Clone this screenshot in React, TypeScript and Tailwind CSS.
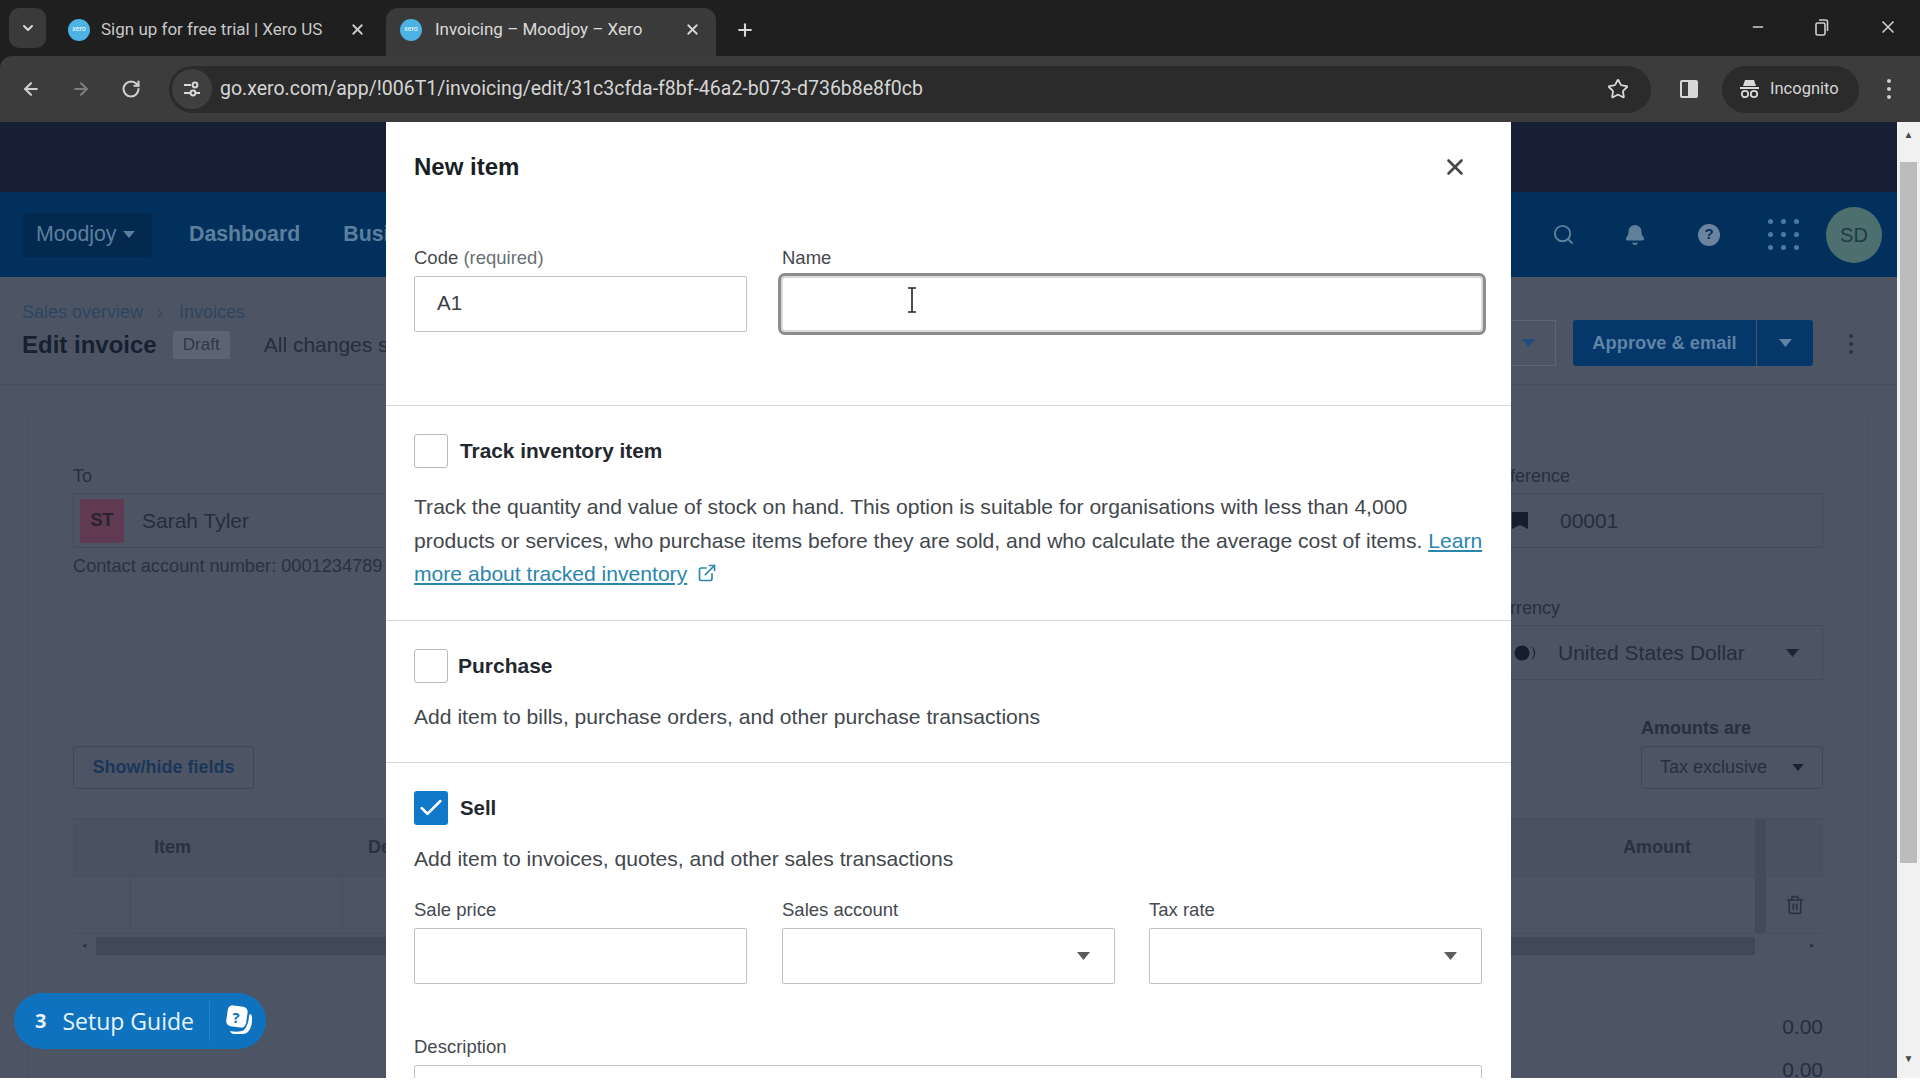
import React from "react";
import { ArrowLeft, ArrowRight, RotateCw, Star, X, Plus, ChevronDown, Minus, Search, Bell, Trash2, Check, ExternalLink } from "lucide-react";

const Caret = ({ c = "#5c5c5c", w = 13 }: { c?: string; w?: number }) => (
  <svg width={w} height={Math.round(w * 0.62)} viewBox="0 0 10 6"><path d="M0 0h10L5 6z" fill={c} /></svg>
);

const Favicon = () => (
  <div className="w-[22px] h-[22px] rounded-full bg-[#4db2e4] flex items-center justify-center shrink-0">
    <span className="text-[7px] text-white leading-none">xero</span>
  </div>
);

function Tabs() {
  return (
    <div className="h-[56px] bg-[#1f1f1f] flex items-end pl-[9px] shrink-0">
      <div className="w-[37px] h-[40px] mb-[8px] rounded-[10px] bg-[#3a3a3a] flex items-center justify-center">
        <ChevronDown size={16} strokeWidth={3} color="#d8d8d8" />
      </div>
      <div className="w-[340px] h-[48px] pl-[22px] pb-[5px] flex items-center text-[#c8c8c8] text-[17px]">
        <Favicon />
        <span className="ml-[11px] w-[248px] whitespace-nowrap">Sign up for free trial | Xero US</span>
        <X size={17} strokeWidth={2.5} color="#cfcfcf" />
      </div>
      <div className="w-[330px] h-[48px] pl-[14px] pb-[5px] bg-[#3a3a3a] rounded-t-[12px] flex items-center text-[#dadada] text-[17px]">
        <Favicon />
        <span className="ml-[13px] w-[249px] whitespace-nowrap">Invoicing – Moodjoy – Xero</span>
        <X size={17} strokeWidth={2.5} color="#d8d8d8" />
      </div>
      <div className="h-[48px] ml-[19px] pb-[5px] flex items-center"><Plus size={20} strokeWidth={2.5} color="#d8d8d8" /></div>
      <div className="flex-1" />
      <div className="h-[56px] flex items-center pr-[22px] gap-[48px] pb-[2px]">
        <Minus size={16} strokeWidth={2} color="#cfcfcf" />
        <svg width="16" height="18" viewBox="0 0 16 18" fill="none" stroke="#cfcfcf" strokeWidth="1.6"><rect x="2" y="5" width="9" height="12" rx="1.5" /><path d="M5 2h6.5a2 2 0 0 1 2 2v9" /></svg>
        <X size={20} strokeWidth={2} color="#cfcfcf" />
      </div>
    </div>
  );
}

function Toolbar() {
  return (
    <div className="h-[66px] bg-[#3c3c3c] rounded-tl-[12px] flex items-center pl-[21px] shrink-0">
      <ArrowLeft size={20} strokeWidth={2.5} color="#d0d0d0" />
      <ArrowRight size={20} strokeWidth={2.5} color="#7d7d7d" className="ml-[30px]" />
      <RotateCw size={20} strokeWidth={2.5} color="#d0d0d0" className="ml-[30px]" />
      <div className="ml-[28px] w-[1482px] h-[47px] bg-[#2b2b2b] rounded-full flex items-center pl-[3px]">
        <div className="w-[40px] h-[40px] rounded-full bg-[#3f3f3f] flex items-center justify-center">
          <svg width="18" height="18" viewBox="0 0 18 18" fill="none" stroke="#d8d8d8" strokeWidth="2"><path d="M1 5h7M13 13h4M1 13h6" /><circle cx="12" cy="5" r="2.4" /><circle cx="10" cy="13" r="2.4" /></svg>
        </div>
        <span className="ml-[8px] text-[19.5px] text-[#d6d6d6] whitespace-nowrap">go.xero.com/app/!006T1/invoicing/edit/31c3cfda-f8bf-46a2-b073-d736b8e8f0cb</span>
        <div className="flex-1" />
        <Star size={22} strokeWidth={2} color="#d8d8d8" className="mr-[22px]" />
      </div>
      <div className="ml-[29px] w-[18px] h-[18px] border-2 border-[#d8d8d8] flex justify-end rounded-[2px]"><div className="w-[8px] bg-[#d8d8d8]" /></div>
      <div className="ml-[24px] w-[137px] h-[47px] rounded-full bg-[#2b2b2b] flex items-center pl-[17px] gap-[10px]">
        <svg width="21" height="20" viewBox="0 0 21 20" fill="#dadada"><path d="M6 1h9l2 6H4z" /><rect x="1" y="8" width="19" height="2" /><circle cx="6" cy="15" r="3.2" fill="none" stroke="#dadada" strokeWidth="1.8" /><circle cx="15" cy="15" r="3.2" fill="none" stroke="#dadada" strokeWidth="1.8" /></svg>
        <span className="text-[16.5px] text-[#d6d6d6]">Incognito</span>
      </div>
      <div className="ml-[28px] flex flex-col gap-[4px]">
        <div className="w-[4px] h-[4px] rounded-full bg-[#d0d0d0]" />
        <div className="w-[4px] h-[4px] rounded-full bg-[#d0d0d0]" />
        <div className="w-[4px] h-[4px] rounded-full bg-[#d0d0d0]" />
      </div>
    </div>
  );
}

function Background() {
  const dots = Array.from({ length: 9 });
  return (
    <div className="flex-1 min-w-0 bg-[#4d5564] flex flex-col overflow-hidden">
      <div className="h-[70px] bg-[#161f33] shrink-0" />
      <div className="h-[85px] bg-[#02305c] shrink-0 flex items-center pl-[23px] pr-[15px] font-bold text-[#5d7f9e] text-[21.3px]">
        <div className="w-[129px] h-[44px] rounded-[3px] bg-[#032a4e] flex items-center pl-[13px] gap-[6px] font-normal">
          <span>Moodjoy</span><Caret c="#5d7f9e" w={12} />
        </div>
        <span className="ml-[37px]">Dashboard</span>
        <span className="ml-[43px]">Business</span>
        <div className="flex-1" />
        <Search size={23} color="#5f7f9b" strokeWidth={2} />
        <Bell size={22} color="#5f7f9b" fill="#5f7f9b" className="ml-[49px]" />
        <div className="ml-[52px] w-[22px] h-[22px] rounded-full bg-[#6b83a0] flex items-center justify-center text-[15px] text-[#02305c]">?</div>
        <div className="ml-[48px] grid grid-cols-3 gap-[8px]">
          {dots.map((_, i) => <div key={i} className="w-[5px] h-[5px] rounded-full bg-[#4a7aa8]" />)}
        </div>
        <div className="ml-[27px] w-[56px] h-[56px] rounded-full bg-[#4d6f70] flex items-center justify-center text-[#1f3a44] text-[20px] font-normal">SD</div>
      </div>
      <div className="h-[108px] shrink-0 border-b border-[#474f5e] flex justify-between pl-[22px] pr-[44px]">
        <div>
          <div className="mt-[25px] flex items-center text-[18px] text-[#2e4560] leading-[20px]">
            <span>Sales overview</span><span className="ml-[14px] text-[#3c4656]">›</span><span className="ml-[16px]">Invoices</span>
          </div>
          <div className="mt-[7px] flex items-center">
            <span className="text-[24px] font-bold text-[#171f30] leading-[28px]">Edit invoice</span>
            <span className="ml-[16px] w-[57px] h-[28px] bg-[#5c6371] rounded-[2px] flex items-center justify-center text-[17px] text-[#2f3645]">Draft</span>
            <span className="ml-[34px] text-[21px] text-[#262d3c] whitespace-nowrap">All changes saved</span>
          </div>
        </div>
        <div className="flex items-start mt-[43px]">
          <div className="w-[60px] h-[46px] border border-[#5e6676] flex items-center justify-end pr-[20px] mr-[17px]"><Caret c="#1f4d7d" /></div>
          <div className="w-[183px] h-[46px] bg-[#05376a] rounded-l-[3px] flex items-center justify-center font-bold text-[18.3px] text-[#5f84a6]">Approve &amp; email</div>
          <div className="w-[56px] h-[46px] ml-[1px] bg-[#05376a] rounded-r-[3px] flex items-center justify-center"><Caret c="#5f84a6" /></div>
          <div className="ml-[36px] mt-[14px] flex flex-col gap-[4px]">
            <div className="w-[4px] h-[4px] rounded-full bg-[#2b3342]" />
            <div className="w-[4px] h-[4px] rounded-full bg-[#2b3342]" />
            <div className="w-[4px] h-[4px] rounded-full bg-[#2b3342]" />
          </div>
        </div>
      </div>
      <div className="mt-[27px] ml-[27px] mr-[29px] flex-1 border border-[#495160] pl-[45px] pr-[44px] text-[#282f3d]">
        <div className="flex justify-between h-[304px]">
          <div className="w-[520px] pt-[53px]">
            <div className="h-[20px] leading-[20px] text-[18px]">To</div>
            <div className="mt-[7px] h-[55px] border border-[#444c5a] flex items-center pl-[6px]">
              <div className="w-[44px] h-[44px] bg-[#5f3a52] flex items-center justify-center text-[18px] text-[#2b2230] font-bold">ST</div>
              <span className="ml-[18px] text-[21px] text-[#262d3c]">Sarah Tyler</span>
            </div>
            <div className="mt-[7px] h-[22px] leading-[22px] text-[18.2px] text-[#2a3140] whitespace-nowrap">Contact account number: 0001234789</div>
          </div>
          <div className="w-[336px] pt-[53px]">
            <div className="h-[20px] leading-[20px] text-[18px]">Reference</div>
            <div className="mt-[7px] h-[55px] border border-[#444c5a] flex items-center pl-[24px]">
              <svg width="16" height="17" viewBox="0 0 16 17"><path d="M0 0h16v17l-8-4-8 4z" fill="#161d2c" /></svg>
              <span className="ml-[32px] text-[21px] text-[#262d3c]">00001</span>
            </div>
            <div className="mt-[50px] h-[20px] leading-[20px] text-[18px]">Currency</div>
            <div className="mt-[7px] h-[55px] border border-[#444c5a] flex items-center pl-[26px] pr-[23px] justify-between">
              <svg width="24" height="16" viewBox="0 0 24 16" className="shrink-0"><circle cx="8" cy="8" r="7.5" fill="#161d2c" /><path d="M17 1a8 8 0 0 1 0 14 9.5 9.5 0 0 0 0-14z" fill="#161d2c" /></svg>
              <span className="ml-[20px] mr-auto text-[21px] text-[#262d3c] whitespace-nowrap">United States Dollar</span>
              <Caret c="#1d2432" />
            </div>
          </div>
        </div>
        <div className="h-[72px] flex justify-between items-end">
          <div className="w-[181px] h-[43px] border border-[#3f4756] rounded-[3px] flex items-center justify-center text-[18px] font-bold text-[#1b3658]">Show/hide fields</div>
          <div className="w-[182px]">
            <div className="h-[31px] text-[18px] font-bold text-[#282f3d] whitespace-nowrap">Amounts are</div>
            <div className="h-[43px] border border-[#3f4756] rounded-[3px] flex items-center pl-[18px] pr-[18px] justify-between text-[18px]">
              <span>Tax exclusive</span><Caret c="#1d2432" w={12} />
            </div>
          </div>
        </div>
        <div className="mt-[29px] border-t border-[#474f5e]">
          <div className="h-[57px] bg-[#4a5261] flex items-stretch pl-[81px] text-[18px] font-bold text-[#2a3140]">
            <span className="self-center">Item</span>
            <span className="self-center ml-[177px]">Description</span>
            <span className="self-center ml-auto mr-[64px]">Amount</span>
            <div className="w-[68px] border-l-[11px] border-[#434b59]" />
          </div>
          <div className="h-[58px] border-y border-[#474f5e] flex">
            <div className="w-[58px] border-r border-[#474f5e]" />
            <div className="w-[212px] border-r border-[#474f5e]" />
            <div className="flex-1" />
            <div className="w-[68px] flex items-center justify-center border-l-[11px] border-[#434b59]"><Trash2 size={20} color="#2b3342" /></div>
          </div>
          <div className="h-[23px] flex items-center">
            <div className="w-[23px] flex justify-center text-[9px] text-[#2b3342]">◂</div>
            <div className="w-[1659px] h-[18px] bg-[#414957]" />
            <div className="flex-1 flex justify-end pr-[8px] text-[9px] text-[#2b3342]">▸</div>
          </div>
        </div>
        <div className="mt-[55px] flex flex-col items-end text-[21px] text-[#262d3c] leading-[30px] gap-[13px]">
          <span>0.00</span><span>0.00</span>
        </div>
      </div>
    </div>
  );
}

const Label = ({ children }: { children: React.ReactNode }) => (
  <div className="h-[20px] leading-[20px] text-[18.5px] text-[#45494f] whitespace-nowrap">{children}</div>
);

const Box = ({ caret }: { caret?: boolean }) => (
  <div className="w-[333px] h-[56px] mt-[8px] border border-[#bfc2c5] rounded-[2px] flex items-center justify-end pr-[24px]">
    {caret && <Caret c="#5c5c5c" />}
  </div>
);

const Checkbox = ({ on }: { on?: boolean }) => on ? (
  <div className="w-[34px] h-[34px] rounded-[3px] bg-[#0f78c9] flex items-center justify-center shrink-0"><Check size={28} color="white" strokeWidth={2.2} /></div>
) : (
  <div className="w-[34px] h-[34px] rounded-[3px] border border-[#b8bbbe] bg-white shrink-0" />
);

function Modal() {
  return (
    <div className="absolute left-[386px] top-0 bottom-0 w-[1125px] bg-white overflow-hidden" style={{ fontFamily: "'Liberation Sans', sans-serif" }}>
      <div className="h-[284px] border-b border-[#d6d7d8] pl-[28px] pr-[27px]">
        <div className="h-[88px] flex items-center justify-between pt-[1px]">
          <span className="text-[24px] font-bold text-[#1a1f26]">New item</span>
          <X size={26} strokeWidth={2.4} color="#44484d" className="mr-[16px]" />
        </div>
        <div className="mt-[38px] flex gap-[35px]">
          <div>
            <Label>Code <span className="text-[#6a6f75]">(required)</span></Label>
            <div className="w-[333px] h-[56px] mt-[8px] border border-[#bfc2c5] rounded-[2px] flex items-center pl-[22px] pb-[1px] text-[20.5px] text-[#3c4045]">A1</div>
          </div>
          <div className="relative">
            <Label>Name</Label>
            <div className="w-[702px] h-[56px] mt-[8px] ml-[-1px] rounded-[4px] border-[2px] border-[#d8d8d8] outline-[3px] outline-[#8c8c8c] bg-white" />
            <svg className="absolute left-[124px] top-[39px]" width="12" height="26" viewBox="0 0 12 26" fill="none" stroke="#222" strokeWidth="1.6"><path d="M2 1h8M2 25h8M6 1v24" /></svg>
          </div>
        </div>
      </div>
      <div className="h-[215px] border-b border-[#d6d7d8] pl-[28px] pr-[27px] pt-[28px]">
        <div className="flex items-center">
          <Checkbox />
          <span className="ml-[12px] text-[20.8px] font-bold text-[#23282e]">Track inventory item</span>
        </div>
        <p className="mt-[22px] text-[21.1px] leading-[33.6px] text-[#42474d] whitespace-nowrap">
          Track the quantity and value of stock on hand. This option is suitable for organisations with less than 4,000<br />
          products or services, who purchase items before they are sold, and who calculate the average cost of items. <a className="underline text-[#2a86ad]">Learn<br />more about tracked inventory</a>
          <ExternalLink size={20} color="#2a86ad" className="inline ml-[10px] mb-[5px]" />
        </p>
      </div>
      <div className="h-[142px] border-b border-[#d6d7d8] pl-[28px] pr-[27px] pt-[28px]">
        <div className="flex items-center">
          <Checkbox />
          <span className="ml-[10px] text-[21px] font-bold text-[#23282e]">Purchase</span>
        </div>
        <p className="mt-[17px] text-[21.1px] leading-[34px] text-[#42474d]">Add item to bills, purchase orders, and other purchase transactions</p>
      </div>
      <div className="pl-[28px] pr-[27px] pt-[28px]">
        <div className="flex items-center">
          <Checkbox on />
          <span className="ml-[12px] text-[20.4px] font-bold text-[#23282e]">Sell</span>
        </div>
        <p className="mt-[17px] text-[21.1px] leading-[34px] text-[#42474d]">Add item to invoices, quotes, and other sales transactions</p>
        <div className="mt-[24px] flex gap-[35px]">
          <div><Label>Sale price</Label><Box /></div>
          <div><Label>Sales account</Label><Box caret /></div>
          <div className="ml-[-1px]"><Label>Tax rate</Label><Box caret /></div>
        </div>
        <div className="mt-[53px]"><Label>Description</Label></div>
        <div className="mt-[8px] w-[1068px] h-[80px] border border-[#bfc2c5] rounded-[2px]" />
      </div>
    </div>
  );
}

function Scrollbar() {
  return (
    <div className="w-[23px] bg-[#f1f1f1] flex flex-col items-center shrink-0">
      <div className="h-[40px] pt-[8px] text-[#4a4a4a] text-[10px] leading-[10px]">▲</div>
      <div className="w-[17px] h-[701px] bg-[#bcbcbc]" />
      <div className="flex-1" />
      <div className="h-[24px] text-[#4a4a4a] text-[10px] leading-[10px]">▼</div>
    </div>
  );
}

export default function App() {
  return (
    <div className="w-[1920px] h-[1080px] overflow-hidden flex flex-col bg-white" style={{ fontFamily: "'Liberation Sans', sans-serif" }}>
      <div className="bg-[#1f1f1f]" style={{ fontFamily: "Roboto, sans-serif" }}>
        <Tabs />
        <Toolbar />
      </div>
      <div className="h-[956px] flex relative shrink-0">
        <Background />
        <Scrollbar />
        <Modal />
        <div className="absolute left-[14px] top-[871px] w-[252px] h-[56px] rounded-full bg-[#0f72bf] flex items-center text-[#e6f4ff]" style={{ fontFamily: "'Open Sans', sans-serif" }}>
          <span className="ml-[21px] font-bold text-[20px]">3</span>
          <span className="ml-[16px] text-[23px] whitespace-nowrap">Setup Guide</span>
          <div className="ml-[15px] h-[40px] w-px bg-[#2a80c0]" />
          <svg className="ml-[15px]" width="30" height="32" viewBox="0 0 30 32">
            <rect x="2" y="1" width="20" height="21" rx="5" fill="white" transform="rotate(8 12 11)" />
            <path d="M26 9c2 4 1 11-1 15-1.500 3-4 5-8 5H9c-2 0-3-1-4-3 5 1 11 1 14-1 3-3 5-9 5-15z" fill="white" />
            <text x="7.500" y="18" fontSize="15" fontWeight="700" fill="#0f72bf">?</text>
          </svg>
        </div>
      </div>
    </div>
  );
}
